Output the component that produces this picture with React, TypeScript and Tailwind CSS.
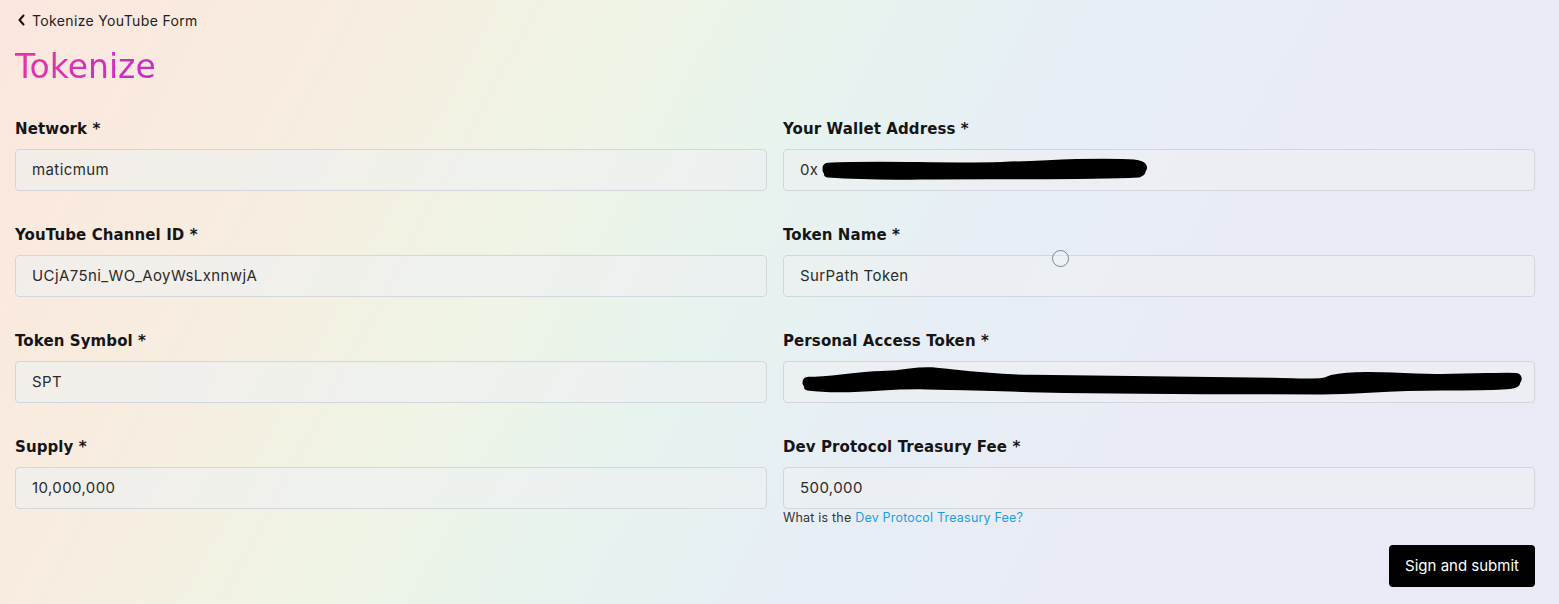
import { type FC, type ReactNode } from 'react';

const heading = { fontFamily: '"DejaVu Sans", "Liberation Sans", sans-serif' };
const body = { fontFamily: 'Inter, "Open Sans", sans-serif' };

const Field: FC<{ label: string; value?: string; children?: ReactNode; extra?: ReactNode }> = ({
  label,
  value,
  children,
  extra,
}) => (
  <div className="flex flex-col">
    <label className="text-[15px] font-bold leading-6 text-[#151515] mb-[8px] tracking-[0.1px]" style={heading}>
      {label}
    </label>
    <div className="relative h-[42px] rounded-[4px] border border-[#d3d6dd] bg-[#eef0f2]/60 px-4 flex items-center text-[15px] tracking-[0.4px] text-[#2b2b2b]">
      {value}
      {children}
    </div>
    {extra}
  </div>
);

// black marker scribbles over the redacted values
const Scribble: FC<{ d: string; w: number }> = ({ d, w }) => (
  <svg className="absolute left-0 top-0 h-full w-full pointer-events-none" viewBox={`0 0 ${w} 42`} preserveAspectRatio="none">
    <path d={d} fill="none" stroke="#000" strokeWidth="11" strokeLinecap="round" strokeLinejoin="round" />
    <path d={d} fill="none" stroke="#000" strokeWidth="8" strokeLinecap="round" transform="translate(0,4)" />
  </svg>
);

const App: FC = () => {
  return (
    <div
      className="min-h-[604px] w-full pl-[15px] pr-[24px] pt-[10px]"
      style={{
        ...body,
        background:
          'linear-gradient(118deg, #fbe6de 0%, #f8ecdf 16%, #eff4e5 34%, #e6f3ef 47%, #e7eef5 58%, #e9ebf6 76%, #e9eaf6 100%)',
      }}
    >
      <a className="flex items-center gap-[6px] h-5 text-[14px] tracking-[0.35px] text-[#222]" href="#">
        <svg width="9" height="12" viewBox="0 0 9 12" className="ml-[2px]">
          <path d="M6.5 1.5 2.5 6l4 4.5" fill="none" stroke="#111" strokeWidth="2" strokeLinecap="round" strokeLinejoin="round" />
        </svg>
        Tokenize YouTube Form
      </a>

      <h1
        className="mt-[19px] text-[33px] leading-9 font-normal bg-gradient-to-r from-[#ea2fa6] to-[#c52cca] bg-clip-text text-transparent w-fit"
        style={heading}
      >
        Tokenize
      </h1>

      <div className="mt-[32px] grid grid-cols-2 gap-x-4 gap-y-[32px]">
        <Field label="Network *" value="maticmum" />
        <Field label="Your Wallet Address *" value="0x">
          <div className="absolute left-[38px] top-0 h-full w-[328px]">
            <Scribble w={328} d="M6 19 C60 16 120 20 180 18 S 250 14 300 15 C 318 15 324 18 316 21 C 260 24 180 22 100 23 C 50 24 20 22 6 21" />
          </div>
        </Field>

        <Field label="YouTube Channel ID *" value="UCjA75ni_WO_AoyWsLxnnwjA" />
        <Field label="Token Name *" value="SurPath Token">
          <div className="absolute left-[268px] top-[-6px] h-[17px] w-[17px] rounded-full border border-[#7c8494] bg-white/20" />
        </Field>

        <Field label="Token Symbol *" value="SPT" />
        <Field label="Personal Access Token *">
          <div className="absolute left-[18px] top-0 h-full w-[722px]">
            <Scribble
              w={722}
              d="M6 21 C30 21 50 16 80 15 S 110 10 130 11 C 160 14 180 18 230 19 C 330 21 420 21 470 22 S 520 24 530 19 C 560 13 600 18 640 18 C 680 18 700 16 714 17 C 716 21 700 22 640 22 C 580 22 560 26 520 26 C 440 26 340 26 240 24 C 160 22 120 19 80 22 C 40 25 20 24 6 22"
            />
          </div>
        </Field>

        <Field label="Supply *" value="10,000,000" />
        <Field
          label="Dev Protocol Treasury Fee *"
          value="500,000"
          extra={
            <>
              <p className="mt-[1px] text-[12.5px] leading-4 tracking-[0.2px] text-[#333]">
                What is the{' '}
                <a href="#" className="text-[#1a9ee6]">
                  Dev Protocol Treasury Fee?
                </a>
              </p>
              <div className="mt-[19px] flex justify-end">
                <button className="h-[42px] rounded-[4px] bg-black px-4 text-[15px] text-white">Sign and submit</button>
              </div>
            </>
          }
        />
      </div>
    </div>
  );
};

export default App;
